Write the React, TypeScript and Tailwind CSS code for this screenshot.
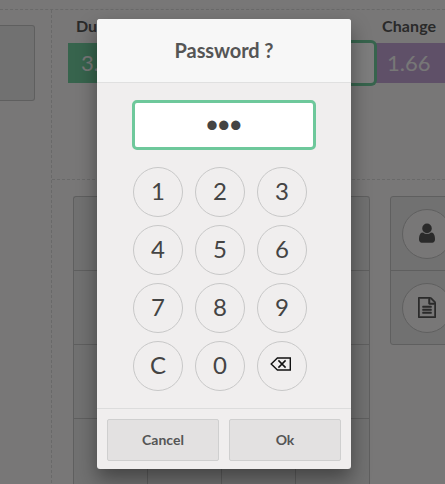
import React from "react";

const KEYS = ["1", "2", "3", "4", "5", "6", "7", "8", "9", "C", "0", "back"];

function Backspace() {
  return (
    <svg width="21" height="15" viewBox="0 0 21 15" className="-mt-[3px] -ml-[3px]" fill="none" stroke="#111">
      <path d="M7.4 1H20.3V13H7.4L1.2 7Z" strokeWidth="1.4" />
      <path d="M8.4 3.4L15.6 10.6M15.6 3.4L8.4 10.6" strokeWidth="1.5" />
    </svg>
  );
}

function UserIcon() {
  return (
    <svg width="16" height="22.4" viewBox="0 0 1280 1792" fill="#555">
      <path d="M1280 1399q0 109-62.5 187t-150.5 78h-854q-88 0-150.5-78t-62.5-187q0-85 8.5-160.5t31.5-152 58.5-131 94-89 134.5-34.5q131 128 313 128t313-128q76 0 134.5 34.5t94 89 58.5 131 31.5 152 8.5 160.5zm-256-887q0 159-112.5 271.5t-271.5 112.5-271.5-112.5-112.5-271.5 112.5-271.5 271.5-112.5 271.5 112.5 112.5 271.5z" />
    </svg>
  );
}

function FileIcon() {
  return (
    <svg width="18" height="21" viewBox="0 0 1536 1792" fill="#555" stroke="#555" strokeWidth="45">
      <path d="M1468 380q28 28 48 76t20 88v1152q0 40-28 68t-68 28h-1344q-40 0-68-28t-28-68v-1600q0-40 28-68t68-28h896q40 0 88 20t76 48zm-444-244v376h376q-10-29-22-41l-313-313q-12-12-41-22zm384 1528v-1024h-416q-40 0-68-28t-28-68v-416h-768v1536h1280zm-1024-864q0-14 9-23t23-9h704q14 0 23 9t9 23v64q0 14-9 23t-23 9h-704q-14 0-23-9t-9-23v-64zm736 224q14 0 23 9t9 23v64q0 14-9 23t-23 9h-704q-14 0-23-9t-9-23v-64q0-14 9-23t23-9h704zm0 256q14 0 23 9t9 23v64q0 14-9 23t-23 9h-704q-14 0-23-9t-9-23v-64q0-14 9-23t23-9h704z" />
    </svg>
  );
}

function PaymentLine() {
  return (
    <div className="grid h-[169px] w-[500px] shrink-0 grid-cols-[153px_153px_194px] grid-rows-[33px_40px] pl-4 text-[#555]">
      <div className="pt-1 pl-2 text-base font-bold">Du</div>
      <div />
      <div className="pt-1 pl-2 text-base font-bold tracking-[0.1px]">Change</div>
      <div className="bg-[#6ec89b] pl-[13px] text-[22px] leading-10 text-[#eee]">3.</div>
      <div className="z-10 rounded-[3px] bg-[#fafafa] shadow-[0_0_0_3px_#6ec89b]" />
      <div className="bg-[#bea0d0] pl-[13px] text-[22px] leading-10 text-[#eee]">1.66</div>
    </div>
  );
}

function PaymentScreen() {
  return (
    <div className="flex h-full flex-col bg-[#f0eeee] pt-[9px]">
      <div className="flex flex-1 border-t border-dashed border-[#d3d3d3]">
        <div className="w-[51px] shrink-0 pt-[15px]">
          <div className="h-[76px] w-[35px] rounded-r-[3px] border border-l-0 border-[#bfbfbf] bg-[#e2e2e2]" />
        </div>
        <div className="flex w-[394px] shrink-0 flex-col overflow-hidden border-l border-dashed border-[#d3d3d3]">
          <PaymentLine />
          <div className="flex items-start gap-5 border-t border-dashed border-[#d3d3d3] pt-4 pl-[21px]">
            <div className="grid shrink-0 grid-cols-[repeat(4,74px)] grid-rows-[repeat(4,74px)] rounded-[3px] border-t border-l border-[#bfbfbf] bg-[#e2e2e2]">
              {Array.from({ length: 16 }, (_, i) => (
                <div key={i} className={`border-r border-b border-[#bfbfbf] ${i === 3 ? "rounded-tr-[3px]" : ""}`} />
              ))}
            </div>
            <div className="w-[120px] shrink-0 rounded-[3px] border border-[#bfbfbf] bg-[#e2e2e2]">
              <div className="flex h-[74px] items-center border-b border-[#bfbfbf] pl-[11px]">
                <div className="flex size-[50px] items-center justify-center rounded-full border border-[#bfbfbf] bg-[#f0eeee]">
                  <UserIcon />
                </div>
              </div>
              <div className="flex h-[73px] items-center pl-[11px]">
                <div className="flex size-[50px] items-center justify-center rounded-full border border-[#bfbfbf] bg-[#f0eeee]">
                  <FileIcon />
                </div>
              </div>
            </div>
          </div>
        </div>
      </div>
    </div>
  );
}

function PasswordPopup() {
  return (
    <div className="flex h-[450px] w-[254px] flex-col rounded-[3px] bg-[#f0eeee] text-[#444] shadow-[0_10px_20px_rgba(0,0,0,0.4)]">
      <div className="flex h-16 shrink-0 items-center justify-center rounded-t-[3px] border-b border-[#e0e0e0] bg-[#f7f7f7] pb-0.5 text-xl font-bold tracking-[-0.1px] text-[#555]">
        Password ?
      </div>
      <div className="flex-1 pt-[17px]">
        <div className="ml-[35px] flex h-[50px] w-[184px] items-center justify-center rounded-[5px] border-[3px] border-[#6ec89b] bg-white pr-[3px] pb-[3px] text-[25px] tracking-[-2.6px]">
          •••
        </div>
        <div className="mt-[17px] ml-9 grid w-[174px] grid-cols-3 gap-x-3 gap-y-2">
          {KEYS.map((k) => (
            <button key={k} className="flex size-[50px] items-center justify-center rounded-full border border-[#c8c8c8] text-2xl">
              {k === "back" ? <Backspace /> : <span className="pb-0.5">{k}</span>}
            </button>
          ))}
        </div>
      </div>
      <div className="flex h-[61px] shrink-0 gap-2.5 border-t border-[#dcdcdc] px-2.5 pt-2.5 text-sm font-bold text-[#555]">
        <button className="h-[42px] flex-1 rounded-[2px] border border-[#cfcfcf] bg-[#e3e1e1]">Cancel</button>
        <button className="h-[42px] flex-1 rounded-[2px] border border-[#cfcfcf] bg-[#e3e1e1]">Ok</button>
      </div>
    </div>
  );
}

export default function App() {
  return (
    <div className="relative h-[484px] w-[445px] overflow-hidden font-['Lato',sans-serif]">
      <PaymentScreen />
      <div className="absolute inset-0 z-20 bg-black/50 pt-[19px] pl-[97px]">
        <PasswordPopup />
      </div>
    </div>
  );
}
